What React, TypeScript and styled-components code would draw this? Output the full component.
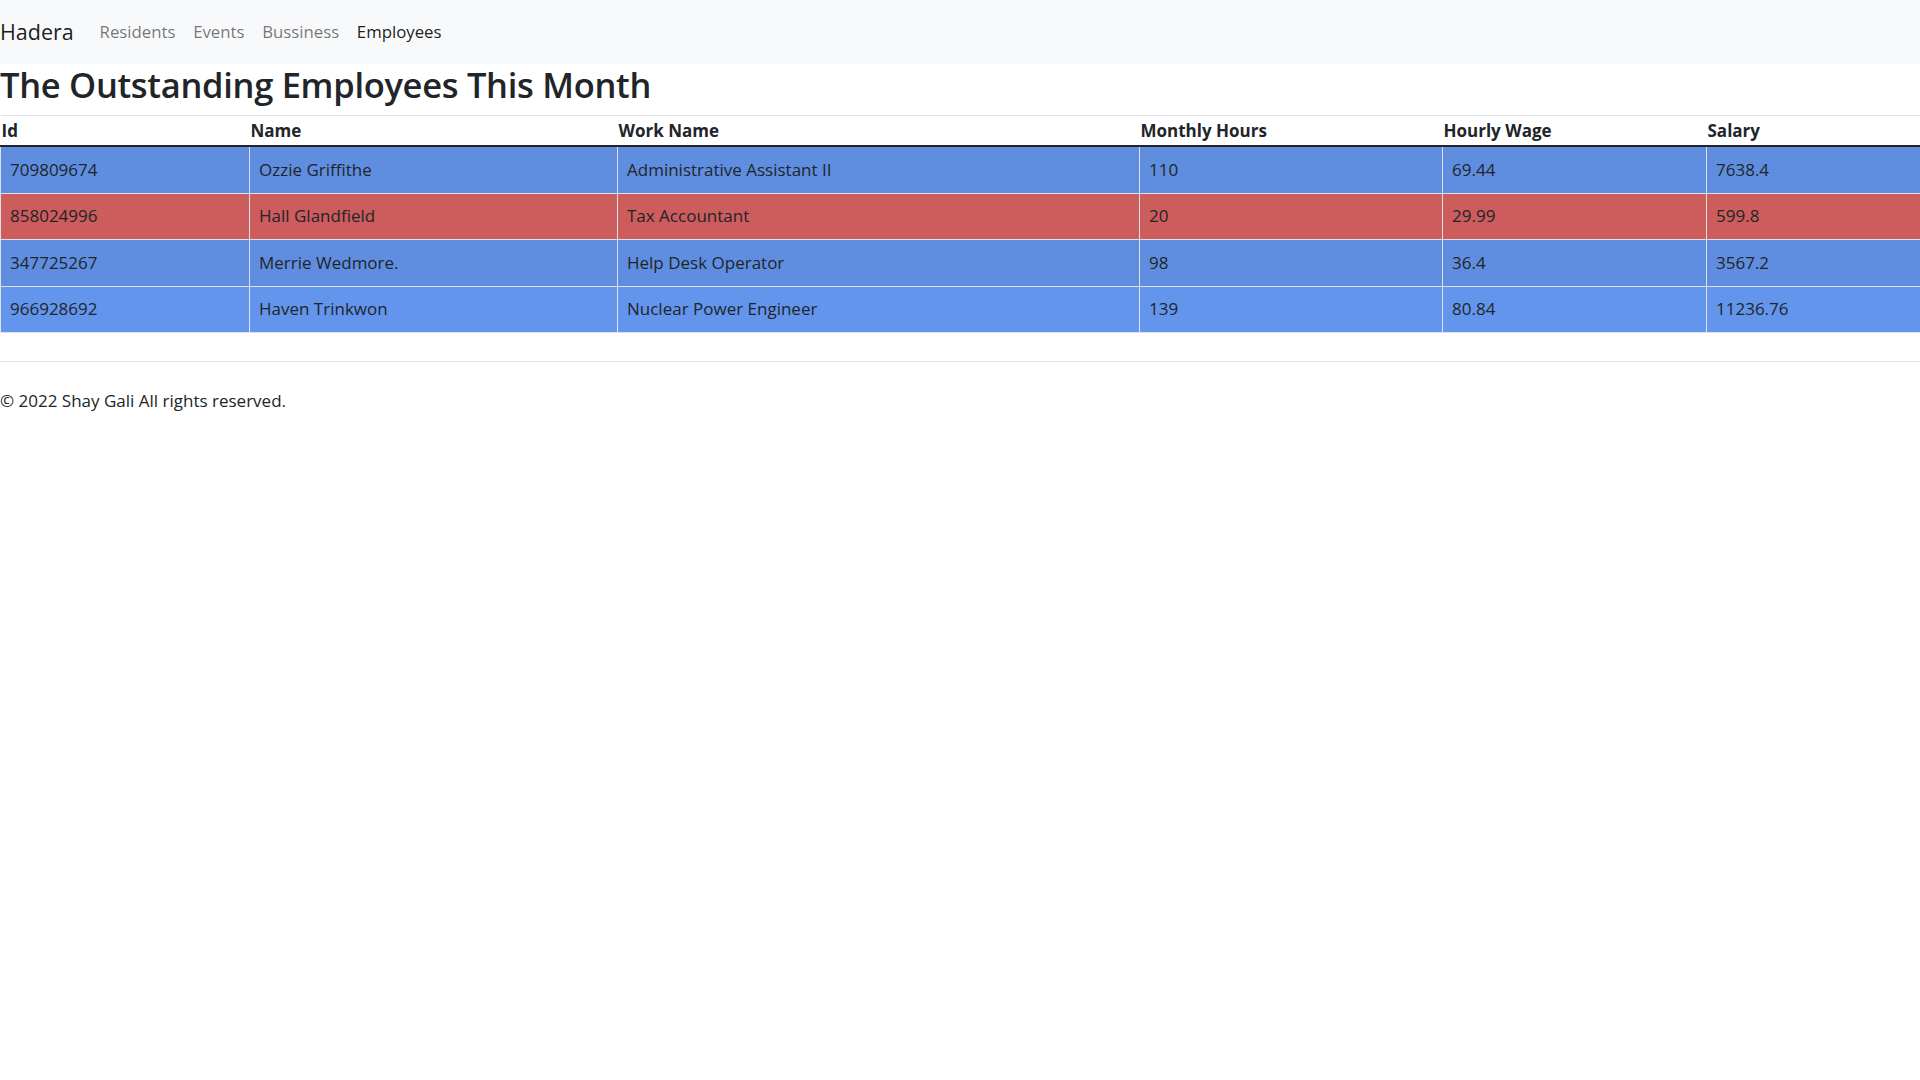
import styled, { createGlobalStyle } from 'styled-components';

const GlobalStyle = createGlobalStyle`
  body {
    margin: 0;
    font-family: "Open Sans", "Noto Sans", sans-serif;
    font-size: 17px;
    line-height: 26.4px;
    color: #212529;
    background: #ffffff;
  }
`;

const Navbar = styled.nav`
  height: 64px;
  background-color: #f8f9fa;
  display: flex;
  align-items: center;
`;

const Brand = styled.a`
  font-size: 21.5px;
  color: rgba(0, 0, 0, 0.9);
  margin-right: 17px;
  text-decoration: none;
`;

const NavLinks = styled.ul`
  display: flex;
  list-style: none;
  margin: 0;
  padding: 0;
`;

const NavLink = styled.a<{ $active?: boolean }>`
  display: block;
  padding: 0 8.8px;
  font-size: 16.8px;
  color: ${(p) => (p.$active ? 'rgba(0, 0, 0, 0.9)' : 'rgba(0, 0, 0, 0.55)')};
  text-decoration: none;
`;

const Titulo = styled.h2`
  margin: 0 0 9px;
  font-size: 34.5px;
  font-weight: 600;
  letter-spacing: -0.3px;
  line-height: 42px;
`;

const Tabela = styled.table`
  width: 100%;
  border-collapse: collapse;
  table-layout: fixed;
  margin-bottom: 28px;
`;

const Coluna = styled.col<{ $w: number }>`
  width: ${(p) => p.$w}px;
`;

const Cabecalho = styled.thead`
  border-top: 1px solid #dee2e6;
  border-bottom: 2px solid #212529;
`;

const CelulaCabecalho = styled.th`
  text-align: left;
  font-weight: 700;
  padding: 2px 1px 1px;
`;

const Linha = styled.tr<{ $tom: 'blue' | 'red'; $listrada: boolean }>`
  background-color: ${(p) =>
    p.$tom === 'red'
      ? p.$listrada ? '#c35757' : '#cd5c5c'
      : p.$listrada ? '#5f8ee1' : '#6495ed'};
`;

const Celula = styled.td`
  padding: 9.5px 9px;
  border: 1px solid #dee2e6;
`;

const Rodape = styled.footer`
  border-top: 1px solid #dee2e6;
  padding: 26px 0 17px;
`;

const employees = [
  { id: '709809674', name: 'Ozzie Griffithe', work: 'Administrative Assistant II', hours: 110, wage: 69.44, salary: 7638.4 },
  { id: '858024996', name: 'Hall Glandfield', work: 'Tax Accountant', hours: 20, wage: 29.99, salary: 599.8 },
  { id: '347725267', name: 'Merrie Wedmore.', work: 'Help Desk Operator', hours: 98, wage: 36.4, salary: 3567.2 },
  { id: '966928692', name: 'Haven Trinkwon', work: 'Nuclear Power Engineer', hours: 139, wage: 80.84, salary: 11236.76 },
];

const larguras = [249, 368, 522, 303, 264, 214];

export default function App() {
  return (
    <>
      <GlobalStyle />
      <Navbar>
        <Brand href="#">Hadera</Brand>
        <NavLinks>
          <li><NavLink href="#">Residents</NavLink></li>
          <li><NavLink href="#">Events</NavLink></li>
          <li><NavLink href="#">Bussiness</NavLink></li>
          <li><NavLink href="#" $active>Employees</NavLink></li>
        </NavLinks>
      </Navbar>
      <Titulo>The Outstanding Employees This Month</Titulo>
      <Tabela>
        <colgroup>
          {larguras.map((w, i) => <Coluna key={i} $w={w} />)}
        </colgroup>
        <Cabecalho>
          <tr>
            <CelulaCabecalho>Id</CelulaCabecalho>
            <CelulaCabecalho>Name</CelulaCabecalho>
            <CelulaCabecalho>Work Name</CelulaCabecalho>
            <CelulaCabecalho>Monthly Hours</CelulaCabecalho>
            <CelulaCabecalho>Hourly Wage</CelulaCabecalho>
            <CelulaCabecalho>Salary</CelulaCabecalho>
          </tr>
        </Cabecalho>
        <tbody>
          {employees.map((e, i) => (
            <Linha key={e.id} $tom={e.hours < 50 ? 'red' : 'blue'} $listrada={i % 2 === 0}>
              <Celula>{e.id}</Celula>
              <Celula>{e.name}</Celula>
              <Celula>{e.work}</Celula>
              <Celula>{e.hours}</Celula>
              <Celula>{e.wage}</Celula>
              <Celula>{e.salary}</Celula>
            </Linha>
          ))}
        </tbody>
      </Tabela>
      <Rodape>© 2022 Shay Gali All rights reserved.</Rodape>
    </>
  );
}
